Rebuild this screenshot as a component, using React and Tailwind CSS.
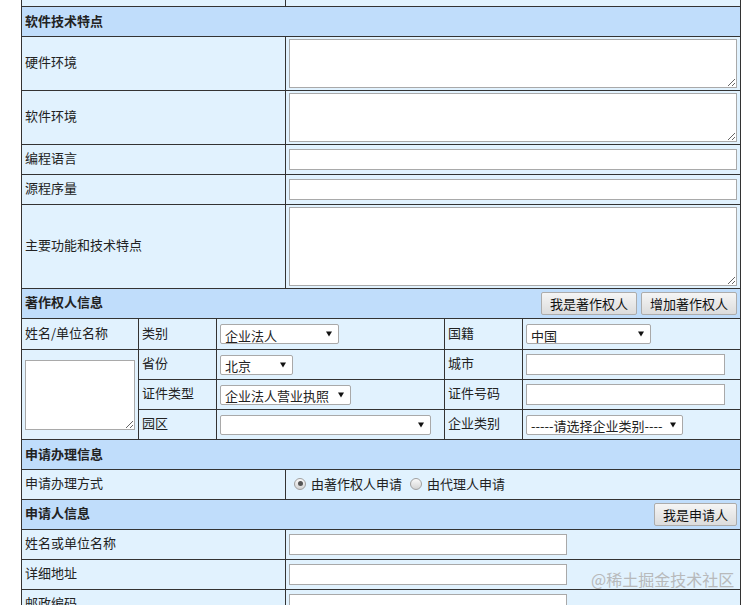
import React from 'react';

const td = 'border border-[#333] px-[3px] align-middle';
const lb = 'border border-[#333] px-[3px] pb-[3px] align-middle';
const th = 'border border-[#333] bg-[#c0ddfb] px-[3px] pb-[2px] align-middle font-bold text-left';
const field = 'block h-[21px] bg-white border border-[#a9a9a9]';
const area = 'block w-full bg-white border border-[#a9a9a9] resize-y';

function Select({ text, w }) {
  return (
    <div className={`${w} h-[20px] flex items-center justify-between bg-white border border-[#a9a9a9] rounded-[2px] pl-[4px] pr-[6px] leading-none`}>
      <span className="pt-[2px]">{text}</span>
      <svg width="6" height="6" viewBox="0 0 6 6">
        <path d="M0 0.5h6L3 5.5z" fill="#111" />
      </svg>
    </div>
  );
}

function Btn({ children }) {
  return (
    <button className="h-[23px] px-[8px] border border-[#acacac] rounded-[2px] bg-gradient-to-b from-[#f5f5f5] to-[#dcdcdc] text-[13px] font-normal leading-none text-[#111]">
      {children}
    </button>
  );
}

function Radio({ checked }) {
  return (
    <span className="inline-flex h-[12px] w-[12px] items-center justify-center rounded-full border border-[#a0a0a0] bg-gradient-to-b from-[#fafafa] to-[#d4d4d4]">
      {checked && <span className="h-[5px] w-[5px] rounded-full bg-[#555]" />}
    </span>
  );
}

function Row({ label, h = 'h-[30px]', children }) {
  return (
    <tr className={h}>
      <td colSpan={3} className={lb}>{label}</td>
      <td colSpan={3} className={td}>{children}</td>
    </tr>
  );
}

export default function App() {
  return (
    <div className="relative h-[605px] w-[750px] overflow-hidden bg-white text-[13px] leading-[18px] text-[#222] font-['Noto_Sans_CJK_SC','Microsoft_YaHei',sans-serif]">
      <table className="ml-[21px] -mt-[24px] w-[720px] table-fixed border-collapse bg-[#e1f2fe]">
        <colgroup>
          <col className="w-[117px]" />
          <col className="w-[78px]" />
          <col className="w-[69px]" />
          <col className="w-[159px]" />
          <col className="w-[78px]" />
          <col className="w-[218px]" />
        </colgroup>
        <tbody>
          <tr className="h-[30px]">
            <td colSpan={3} className={td}></td>
            <td colSpan={3} className={`${td} !align-bottom pb-[5px] leading-none`}>
              <span className="text-[10px]">1</span>
            </td>
          </tr>

          {/* 软件技术特点 */}
          <tr className="h-[30px]">
            <th colSpan={6} className={th}>软件技术特点</th>
          </tr>
          <Row label="硬件环境" h="h-[54px]">
            <textarea className={`${area} h-[49px]`} />
          </Row>
          <Row label="软件环境" h="h-[54px]">
            <textarea className={`${area} h-[49px]`} />
          </Row>
          <Row label="编程语言">
            <input className={`${field} w-full`} />
          </Row>
          <Row label="源程序量">
            <input className={`${field} w-full`} />
          </Row>
          <Row label="主要功能和技术特点" h="h-[84px]">
            <textarea className={`${area} h-[79px]`} />
          </Row>

          {/* 著作权人信息 */}
          <tr className="h-[30px]">
            <th colSpan={6} className="border border-[#333] bg-[#c0ddfb] px-[3px] align-middle font-bold text-left">
              <div className="flex items-center justify-between">
                <span className="-mt-[4px]">著作权人信息</span>
                <div className="flex gap-[4px]">
                  <Btn>我是著作权人</Btn>
                  <Btn>增加著作权人</Btn>
                </div>
              </div>
            </th>
          </tr>
          <tr className="h-[31px]">
            <td className={lb}>姓名/单位名称</td>
            <td className={lb}>类别</td>
            <td colSpan={2} className={td}><Select text="企业法人" w="w-[119px]" /></td>
            <td className={lb}>国籍</td>
            <td className={td}><Select text="中国" w="w-[125px]" /></td>
          </tr>
          <tr className="h-[30px]">
            <td rowSpan={3} className={td}>
              <textarea className={`${area} h-[70px]`} />
            </td>
            <td className={lb}>省份</td>
            <td colSpan={2} className={td}><Select text="北京" w="w-[73px]" /></td>
            <td className={lb}>城市</td>
            <td className={td}><input className={`${field} w-[199px]`} /></td>
          </tr>
          <tr className="h-[30px]">
            <td className={lb}>证件类型</td>
            <td colSpan={2} className={td}><Select text="企业法人营业执照" w="w-[131px]" /></td>
            <td className={lb}>证件号码</td>
            <td className={td}><input className={`${field} w-[199px]`} /></td>
          </tr>
          <tr className="h-[30px]">
            <td className={lb}>园区</td>
            <td colSpan={2} className={td}><Select text="" w="w-[211px]" /></td>
            <td className={lb}>企业类别</td>
            <td className={td}><Select text="-----请选择企业类别----" w="w-[157px]" /></td>
          </tr>

          {/* 申请办理信息 */}
          <tr className="h-[30px]">
            <th colSpan={6} className={th}>申请办理信息</th>
          </tr>
          <Row label="申请办理方式">
            <div className="flex items-center pb-[2px]">
              <span className="ml-[5px] mr-[5px] flex"><Radio checked /></span>
              <span>由著作权人申请</span>
              <span className="ml-[8px] mr-[5px] flex"><Radio /></span>
              <span>由代理人申请</span>
            </div>
          </Row>

          {/* 申请人信息 */}
          <tr className="h-[30px]">
            <th colSpan={6} className="border border-[#333] bg-[#c0ddfb] px-[3px] align-middle font-bold text-left">
              <div className="flex items-center justify-between">
                <span className="-mt-[4px]">申请人信息</span>
                <Btn>我是申请人</Btn>
              </div>
            </th>
          </tr>
          <Row label="姓名或单位名称">
            <input className={`${field} w-[278px]`} />
          </Row>
          <Row label="详细地址">
            <input className={`${field} w-[278px]`} />
          </Row>
          <Row label="邮政编码">
            <input className={`${field} w-[278px]`} />
          </Row>
        </tbody>
      </table>

      <div className="absolute left-[591px] top-[569px] text-[16px] leading-[20px] text-[#b4b4b4] opacity-90">@稀土掘金技术社区</div>
    </div>
  );
}
